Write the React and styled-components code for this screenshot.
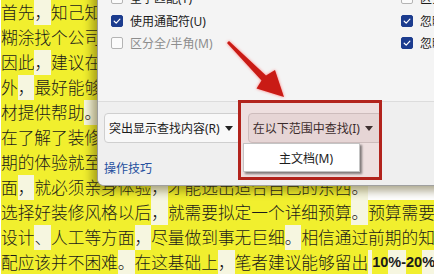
import React from "react";
import styled, { createGlobalStyle } from "styled-components";

const Global = createGlobalStyle`
  html, body { margin: 0; padding: 0; width: 434px; height: 274px; overflow: hidden; background: #ffffff; }
`;

const Page = styled.div`
  position: relative;
  width: 434px;
  height: 274px;
  overflow: hidden;
  background: #ffffff;
`;

const Doc = styled.div`
  padding-left: 1px;
  font-family: "Noto Sans CJK SC", "Noto Sans", sans-serif;
  font-size: 16.7px;
  font-weight: 300;
  color: #1a1a1a;
`;

const Line = styled.div`
  display: flex;
  height: 25px;
  line-height: 25px;
  white-space: nowrap;
`;

const Mark = styled.span`
  display: inline-block;
  height: 25px;
  background: ${(p) => (p.$on ? "#f1ef2e" : "#f6f6e0")};
  font-family: ${(p) =>
    p.$latin ? '"Liberation Sans", Arial, sans-serif' : "inherit"};
  font-weight: ${(p) => (p.$latin ? 700 : "inherit")};
  font-size: ${(p) => (p.$latin ? "14.5px" : "inherit")};
  white-space: pre;
`;

const Dialog = styled.div`
  position: absolute;
  left: 97px;
  top: -22px;
  width: 360px;
  height: 207px;
  display: flex;
  flex-direction: column;
  background: #f4f4f4;
  border-left: 1px solid #9c9c9c;
  border-bottom: 1px solid #a0a0a0;
  border-bottom-left-radius: 7px;
  box-shadow: -5px 5px 10px rgba(70, 60, 0, 0.45);
  font-family: "Noto Sans", "Noto Sans CJK SC", sans-serif;
  font-size: 12px;
  color: #1c1c1c;
  overflow: hidden;
`;

const Options = styled.div`
  height: 123px;
  box-sizing: border-box;
  padding: 8px 0 0 13px;
  display: grid;
  grid-template-columns: 290px 1fr;
  grid-template-rows: 24px 22px 22px;
`;

const OptRow = styled.div`
  display: flex;
  align-items: center;
  gap: 7px;
  white-space: nowrap;
  color: ${(p) => (p.$disabled ? "#8d8d8d" : "#1c1c1c")};
`;

const Box = styled.span`
  width: 12px;
  height: 12px;
  box-sizing: border-box;
  border-radius: 2px;
  flex: none;
  display: flex;
  align-items: center;
  justify-content: center;
  background: ${(p) => (p.$checked ? "#1c3c8e" : "#fbfbfb")};
  border: 1px solid ${(p) => (p.$checked ? "#1c3c8e" : "#b4b4b4")};
`;

const Footer = styled.div`
  flex: 1;
  border-top: 1px solid #dcdcdc;
  background: #efefef;
  padding: 11px 6px 0 6px;
  display: flex;
  flex-direction: column;
`;

const ButtonRow = styled.div`
  display: flex;
  gap: 7px;
`;

const DropButton = styled.div`
  height: 30px;
  box-sizing: border-box;
  display: flex;
  align-items: center;
  gap: 5px;
  padding: 0 ${(p) => (p.$pressed ? "8px" : "7px")} 0 4px;
  border-radius: 4px;
  border: 1px solid ${(p) => (p.$pressed ? "#c9c6c6" : "#cfcfcf")};
  background: ${(p) => (p.$pressed ? "#e6e3e3" : "#f8f8f8")};
  white-space: nowrap;
`;

const Caret = styled.span`
  width: 0;
  height: 0;
  border-left: 4px solid transparent;
  border-right: 4px solid transparent;
  border-top: 5px solid #222;
  margin-top: 1px;
`;

const Link = styled.div`
  margin-top: 18px;
  color: #24509e;
  line-height: 16px;
`;

const RedBox = styled.div`
  position: absolute;
  left: 238px;
  top: 100px;
  width: 144px;
  height: 80px;
  box-sizing: border-box;
  border: 3px solid #b2231c;
  background: rgba(235, 130, 130, 0.14);
`;

const Menu = styled.div`
  position: absolute;
  left: 243px;
  top: 143px;
  width: 117px;
  height: 29px;
  box-sizing: border-box;
  background: #ffffff;
  border: 1px solid #c4c4c4;
  box-shadow: 2px 2px 2px rgba(40, 40, 40, 0.55);
  display: flex;
  align-items: center;
  padding-left: 35px;
  font-family: "Noto Sans", "Noto Sans CJK SC", sans-serif;
  font-size: 12px;
  color: #1c1c1c;
`;

const Arrow = styled.svg`
  position: absolute;
  left: 0;
  top: 0;
  filter: drop-shadow(0 0 1.5px rgba(255, 110, 110, 0.9));
`;

const docLines = [
  "首先，知己知彼，对于装修一知半解的人们来说，很容易稀里",
  "糊涂找个公司就开始装修，结果往往不尽如人意。",
  "因此，建议在装修之前多了解一些装修知识，另",
  "外，最好能够多参考一些装修案例，为选择装修风格和",
  "材提供帮助。",
  "在了解了装修风格之后，最好能够去样板间实际看一看，前",
  "期的体验就至关重要，如果想要真正了解一种风格的方方",
  "面，就必须亲身体验，才能选出适合自己的东西。",
  "选择好装修风格以后，就需要拟定一个详细预算。预算需要",
  "设计、人工等方面，尽量做到事无巨细。相信通过前期的知",
  "配应该并不困难。在这基础上，笔者建议能够留出",
];

const runs = (text, latin) =>
  (text.match(/[\u4e00-\u9fff0-9]+|[^\u4e00-\u9fff0-9]+/g) || []).map(
    (r, i) => (
      <Mark key={i} $on={/[\u4e00-\u9fff0-9]/.test(r)} $latin={latin}>
        {r}
      </Mark>
    )
  );

const Check = ({ checked }) => (
  <Box $checked={checked}>
    {checked && (
      <svg width="10" height="10" viewBox="0 0 10 10">
        <path
          d="M2.2 5.2 L4.2 7.1 L7.9 3.2"
          fill="none"
          stroke="#ffffff"
          strokeWidth="1.2"
          strokeLinecap="round"
          strokeLinejoin="round"
        />
      </svg>
    )}
  </Box>
);

const Option = ({ checked, disabled, children }) => (
  <OptRow $disabled={disabled}>
    <Check checked={checked} />
    <span>{children}</span>
  </OptRow>
);

export default function App() {
  return (
    <Page>
      <Global />
      <Doc>
        {docLines.map((l, i) => (
          <Line key={i}>
            {runs(l, false)}
            {i === docLines.length - 1 && runs(" 10%-20%", true)}
          </Line>
        ))}
      </Doc>

      <Dialog>
        <Options>
          <Option>全字匹配(Y)</Option>
          <Option>区分后缀(T)</Option>
          <Option checked>使用通配符(U)</Option>
          <Option checked>忽略标点符号(S)</Option>
          <Option disabled>区分全/半角(M)</Option>
          <Option checked>忽略空格(W)</Option>
        </Options>
        <Footer>
          <ButtonRow>
            <DropButton>
              突出显示查找内容(R)
              <Caret />
            </DropButton>
            <DropButton $pressed>
              在以下范围中查找(I)
              <Caret />
            </DropButton>
          </ButtonRow>
          <Link>操作技巧</Link>
        </Footer>
      </Dialog>

      <RedBox />
      <Menu>主文档(M)</Menu>

      <Arrow width="434" height="274" viewBox="0 0 434 274">
        <polygon
          points="229,41 266,75.5 275,70 284,97 256.5,88.5 261.5,80.5 227,43"
          fill="#c91b15"
        />
      </Arrow>
    </Page>
  );
}
